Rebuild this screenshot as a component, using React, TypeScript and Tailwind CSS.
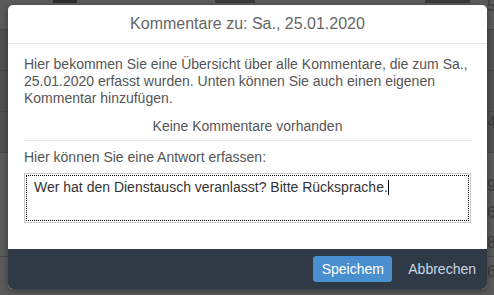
import React from 'react';

const digits = [
  { t: '5', c: 'top-[-6px]' },
  { t: '4', c: 'top-[111px]' },
  { t: '9', c: 'top-[174px]' },
  { t: '6', c: 'top-[201px]' },
  { t: '8', c: 'top-[231px]' },
  { t: '6', c: 'top-[260px]' },
];

const App: React.FC = () => {
  return (
    <div className="relative w-[494px] h-[295px] overflow-hidden bg-[#5a5a5a] font-['Liberation_Sans',Arial,sans-serif]">
      {/* page behind the overlay */}
      <div className="flex flex-col">
        <div className="h-[30px] border-b border-[#474747]" />
        <div className="h-[41px] bg-[#515151] border-b border-[#474747]" />
        <div className="h-[41px] bg-[#515151] border-b border-[#474747]" />
        <div className="h-[41px] bg-[#515151] border-b border-[#474747]" />
        <div className="h-[104px] border-b border-[#474747]" />
      </div>
      <div className="absolute top-0 left-[53px] w-[24px] h-[3px] bg-[#2e2e2e]" />
      <div className="absolute top-0 left-[215px] w-[40px] h-[3px] bg-[#3a3a3a]" />
      <div className="absolute top-0 left-[425px] w-[45px] h-[3px] bg-[#3a3a3a]" />
      {digits.map((d, i) => (
        <div key={i} className={`absolute left-[487px] text-[16px] text-[#3a3a3a] ${d.c}`}>{d.t}</div>
      ))}

      {/* modal */}
      <div className="absolute left-[8px] top-[5px] w-[479px] h-[284px] flex flex-col bg-white rounded-[5px] overflow-hidden shadow-[0_2px_6px_rgba(0,0,0,0.35)]">
        <div className="h-[39px] shrink-0 flex items-center justify-center border-b border-[#e5e5e5] text-[16px] text-[#666]">
          Kommentare zu: Sa., 25.01.2020
        </div>
        <div className="flex-1 px-4 pt-[12px] text-[14px] leading-[17px] text-[#555]">
          <p>
            Hier bekommen Sie eine Übersicht über alle Kommentare, die zum Sa., 25.01.2020 erfasst wurden. Unten können Sie auch einen eigenen Kommentar hinzufügen.
          </p>
          <p className="mt-[11px] text-center">Keine Kommentare vorhanden</p>
          <div className="mt-[5px] border-t border-[#e3e3e3]" />
          <p className="mt-[8px]">Hier können Sie eine Antwort erfassen:</p>
          <div className="mt-[7px] h-[50px] border border-[#c8c8c8] p-px">
            <div className="h-full border border-dotted border-black px-[7px] pt-[3px] text-[#333]">
              Wer hat den Dienstausch veranlasst? Bitte Rücksprache.
              <span className="inline-block w-px h-[15px] bg-black align-[-3px]" />
            </div>
          </div>
        </div>
        <div className="h-[40px] shrink-0 bg-[#2f3a46] flex items-center justify-end pr-[11px] gap-[16px]">
          <button className="h-[26px] w-[79px] rounded-[3px] bg-[#4a8fcf] text-white text-[14px]">Speichem</button>
          <button className="text-[14px] text-[#c8d6e6]">Abbrechen</button>
        </div>
      </div>
    </div>
  );
};

export default App;
